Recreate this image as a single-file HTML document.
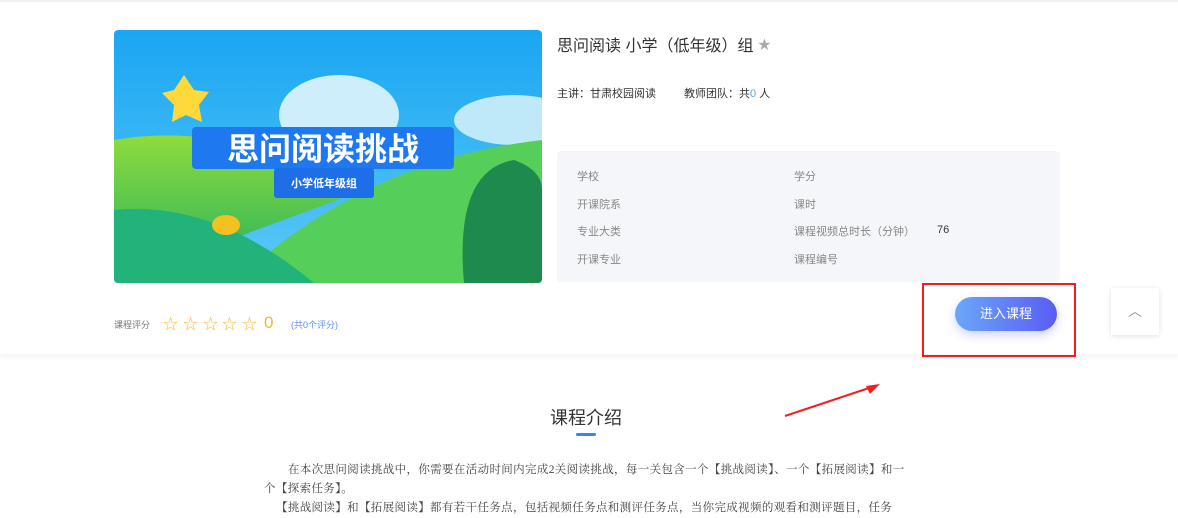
<!DOCTYPE html>
<html><head><meta charset="utf-8"><style>
*{margin:0;padding:0;box-sizing:border-box}
body{width:1178px;height:510px;overflow:hidden;background:#fff;font-family:"Liberation Sans","Noto Sans CJK SC",sans-serif;position:relative}
.top{position:absolute;left:0;top:0;width:1178px;height:354px;background:#fff;box-shadow:0 3px 6px rgba(0,0,0,.05)}
.a{position:absolute}
.st{position:absolute;top:313px;font-size:15px;color:#f5b731}
</style></head><body>
<div class="top"></div>
<div class="a" style="left:0;top:0;width:1178px;height:2px;background:#eef0f3"></div>
<svg class="a" style="left:114px;top:30px;border-radius:4px" width="428" height="253" viewBox="0 0 428 253">
<defs><linearGradient id="sky" x1="0" y1="0" x2="0" y2="1"><stop offset="0" stop-color="#1aa6f2"/><stop offset="1" stop-color="#5cc9f6"/></linearGradient>
<linearGradient id="h1" x1="0" y1="0" x2="0" y2="1"><stop offset="0" stop-color="#8fdc3c"/><stop offset="1" stop-color="#1fae62"/></linearGradient></defs>
<rect width="428" height="253" fill="url(#sky)" rx="4"/>
<ellipse cx="225" cy="85" rx="60" ry="40" fill="#cfeefc"/>
<ellipse cx="400" cy="90" rx="60" ry="25" fill="#bfe8f9"/>
<path d="M0 110 Q120 90 250 160 L0 253Z" fill="url(#h1)"/>
<path d="M120 253 Q250 130 428 110 L428 253Z" fill="#56cf5a"/>
<path d="M0 180 Q100 170 200 253 L0 253Z" fill="#21b37a"/>
<path d="M350 253 Q340 140 400 130 Q428 140 428 160 L428 253Z" fill="#1f8a4e"/>
<polygon points="60,60 70,45 80,60 95,62 85,75 88,92 72,85 58,92 60,75 48,63" fill="#ffd83a"/>
<ellipse cx="112" cy="195" rx="14" ry="10" fill="#f4c120"/>
<rect x="78" y="97" width="262" height="42" rx="4" fill="#1e78f0"/>
<rect x="160" y="138" width="100" height="30" rx="3" fill="#1e6ee8"/>
<text x="209" y="130" font-size="32" font-weight="bold" fill="#fff" text-anchor="middle" font-family="Noto Sans CJK SC">思问阅读挑战</text>
<text x="210" y="157" font-size="11" font-weight="bold" fill="#fff" text-anchor="middle" font-family="Noto Sans CJK SC">小学低年级组</text>
</svg>
<div class="a" style="left:557px;top:32px;font-size:16px;color:#333">思问阅读 小学（低年级）组 <span style="color:#aaa;font-size:13px;position:relative;top:-2px">★</span></div>
<div class="a" style="left:557px;top:85px;font-size:11px;color:#333">主讲：甘肃校园阅读</div>
<div class="a" style="left:684px;top:85px;font-size:11px;color:#333">教师团队：共<span style="color:#5b9cf8">0</span> 人</div>
<div class="a" style="left:557px;top:151px;width:503px;height:131px;background:#f5f6f9;border-radius:4px;font-size:11px;color:#888">
<div class="a" style="left:20px;top:17px">学校</div><div class="a" style="left:237px;top:17px">学分</div>
<div class="a" style="left:20px;top:45px">开课院系</div><div class="a" style="left:237px;top:45px">课时</div>
<div class="a" style="left:20px;top:72px">专业大类</div><div class="a" style="left:237px;top:72px">课程视频总时长（分钟）</div><div class="a" style="left:380px;top:73px;color:#333">76</div>
<div class="a" style="left:20px;top:100px">开课专业</div><div class="a" style="left:237px;top:100px">课程编号</div>
</div>
<div class="a" style="left:114px;top:318px;font-size:9px;color:#777">课程评分</div>
<div class="st" style="left:163px">☆</div><div class="st" style="left:183px">☆</div><div class="st" style="left:203px">☆</div><div class="st" style="left:222px">☆</div><div class="st" style="left:242px">☆</div>
<div class="a" style="left:264px;top:313px;font-size:17px;color:#f5b731">0</div>
<div class="a" style="left:291px;top:318px;font-size:9px;color:#5b8ff0">(共0个评分)</div>
<div class="a" style="left:955px;top:297px;width:102px;height:34px;border-radius:17px;background:linear-gradient(90deg,#6aa7f8,#5a5cf5);box-shadow:0 4px 10px rgba(90,110,245,.3);color:#fff;font-size:13px;text-align:center;line-height:34px">进入课程</div>
<div class="a" style="left:922px;top:283px;width:154px;height:74px;border:2px solid #f01e1e"></div>
<div class="a" style="left:1111px;top:288px;width:48px;height:47px;background:#fff;box-shadow:0 1px 5px rgba(0,0,0,.12);color:#999;text-align:center;line-height:47px;font-size:14px">︿</div>
<svg class="a" style="left:780px;top:380px" width="105" height="40"><line x1="5" y1="36" x2="95" y2="6" stroke="#f02020" stroke-width="2"/><polygon points="100,4 86,6 90,14" fill="#f02020"/></svg>
<div class="a" style="left:0;top:404px;width:1172px;text-align:center;font-size:18px;color:#333">课程介绍</div>
<div class="a" style="left:576px;top:433px;width:20px;height:3px;background:#3b82f6;border-radius:2px"></div>
<div class="a" style="left:264px;top:461px;width:646px;font-family:'Liberation Serif','Noto Serif CJK SC',serif;font-size:11.5px;letter-spacing:0.35px;color:#444;line-height:19px">
<p style="text-indent:24px">在本次思问阅读挑战中，你需要在活动时间内完成2关阅读挑战，每一关包含一个【挑战阅读】、一个【拓展阅读】和一<br>个【探索任务】。</p>
<p style="text-indent:12px">【挑战阅读】和【拓展阅读】都有若干任务点，包括视频任务点和测评任务点，当你完成视频的观看和测评题目，任务</p>
</div>
</body></html>
